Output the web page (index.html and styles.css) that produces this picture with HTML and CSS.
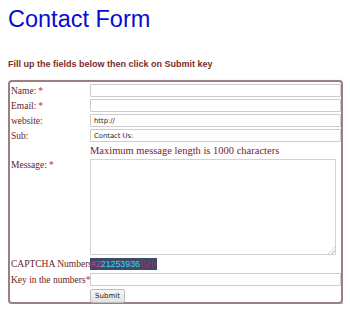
FILE: index.html
```html
<!DOCTYPE html>
<html>
<head>
<meta charset="utf-8">
<link rel="stylesheet" href="styles.css">
</head>
<body>
<h1 class="title">Contact Form</h1>
<p class="intro">Fill up the fields below then click on Submit key</p>
<form class="box">
  <label class="lbl">Name: <span class="req">*</span></label>
  <input class="field" type="text">
  <label class="lbl">Email: <span class="req">*</span></label>
  <input class="field" type="text">
  <label class="lbl">website:</label>
  <input class="field" type="text" value="http://">
  <label class="lbl">Sub:</label>
  <input class="field" type="text" value="Contact Us:">
  <span class="lbl"></span>
  <span class="note">Maximum message length is 1000 characters</span>
  <label class="lbl lbl-top">Message: <span class="req">*</span></label>
  <textarea class="msg"></textarea>
  <label class="lbl lbl-wide">CAPTCHA Numbers</label>
  <span class="captcha"><span class="c1">#2</span><span class="c2">21253936</span><span class="c3">GHI</span></span>
  <label class="lbl">Key in the numbers<span class="req req-tight">*</span></label>
  <input class="field" type="text">
  <span class="lbl"></span>
  <span class="btn-cell"><button class="btn" type="button">Submit</button></span>
</form>
</body>
</html>
```

FILE: styles.css
```css
html, body {
  background: #ffffff;
}
body {
  margin: 5px 7px 0 8px;
  font-family: "Liberation Serif", serif;
}
.title {
  margin: 0;
  font-family: "Liberation Sans", Arial, sans-serif;
  font-weight: normal;
  font-size: 23.5px;
  line-height: 28px;
  color: #0a0ad2;
}
.intro {
  margin: 26px 0 0 0;
  font-family: "Liberation Sans", Arial, sans-serif;
  font-weight: bold;
  font-size: 9px;
  line-height: 11px;
  color: #7a2b2b;
}
.box {
  margin-top: 10px;
  border: 2px solid #9a8080;
  border-radius: 4px;
  box-shadow: 1px 1px 2px rgba(60, 30, 30, 0.45);
  padding: 2px 0 0 1px;
  display: grid;
  grid-template-columns: 79px 1fr;
  row-gap: 2px;
  height: 224px;
  box-sizing: border-box;
  align-content: start;
}
.lbl {
  font-size: 9.5px;
  color: #6a1a1a;
  display: flex;
  align-items: center;
  white-space: nowrap;
}
.lbl-top {
  align-items: flex-start;
  padding-top: 1px;
}
.req {
  color: #d42a2a;
  margin-left: 2px;
}
.req-tight {
  margin-left: 0;
}
.field {
  height: 13px;
  box-sizing: border-box;
  border: 1px solid #cdcdcd;
  border-radius: 1px;
  margin: 0;
  padding: 0 3px;
  font-family: "DejaVu Sans", Tahoma, sans-serif;
  font-size: 6.8px;
  color: #222;
  background: #fff;
  outline: none;
}
.note {
  font-size: 10.5px;
  line-height: 13px;
  height: 13px;
  color: #7a2222;
  white-space: nowrap;
}
.msg {
  width: 246px;
  height: 96px;
  box-sizing: border-box;
  border: 1px solid #d3d3d3;
  margin: 0;
  padding: 0;
  resize: both;
}
.msg::-webkit-resizer {
  background: linear-gradient(135deg, transparent 0 74%, #d2d2d2 74% 79%, transparent 79% 86%, #d2d2d2 86% 91%, transparent 91%);
}
.captcha {
  align-self: center;
  width: 67px;
  height: 12px;
  margin: 1px 0;
  background: #3c4a6c;
  font-family: "Liberation Sans", Arial, sans-serif;
  font-size: 8.8px;
  line-height: 12px;
  padding-left: 1px;
  box-sizing: border-box;
  white-space: nowrap;
  overflow: hidden;
}
.c1 { color: #d0408a; }
.c2 { color: #44d4ea; }
.c3 { color: #b02a40; }
.btn-cell {
  display: flex;
  padding-top: 1px;
}
.btn {
  height: 14px;
  width: 35px;
  padding: 0;
  margin: 0;
  border: 1px solid #bcbcbc;
  border-radius: 2px;
  background: linear-gradient(#f6f6f6, #e4e4e4);
  font-family: "DejaVu Sans", Tahoma, sans-serif;
  font-size: 7px;
  color: #222;
}
```
